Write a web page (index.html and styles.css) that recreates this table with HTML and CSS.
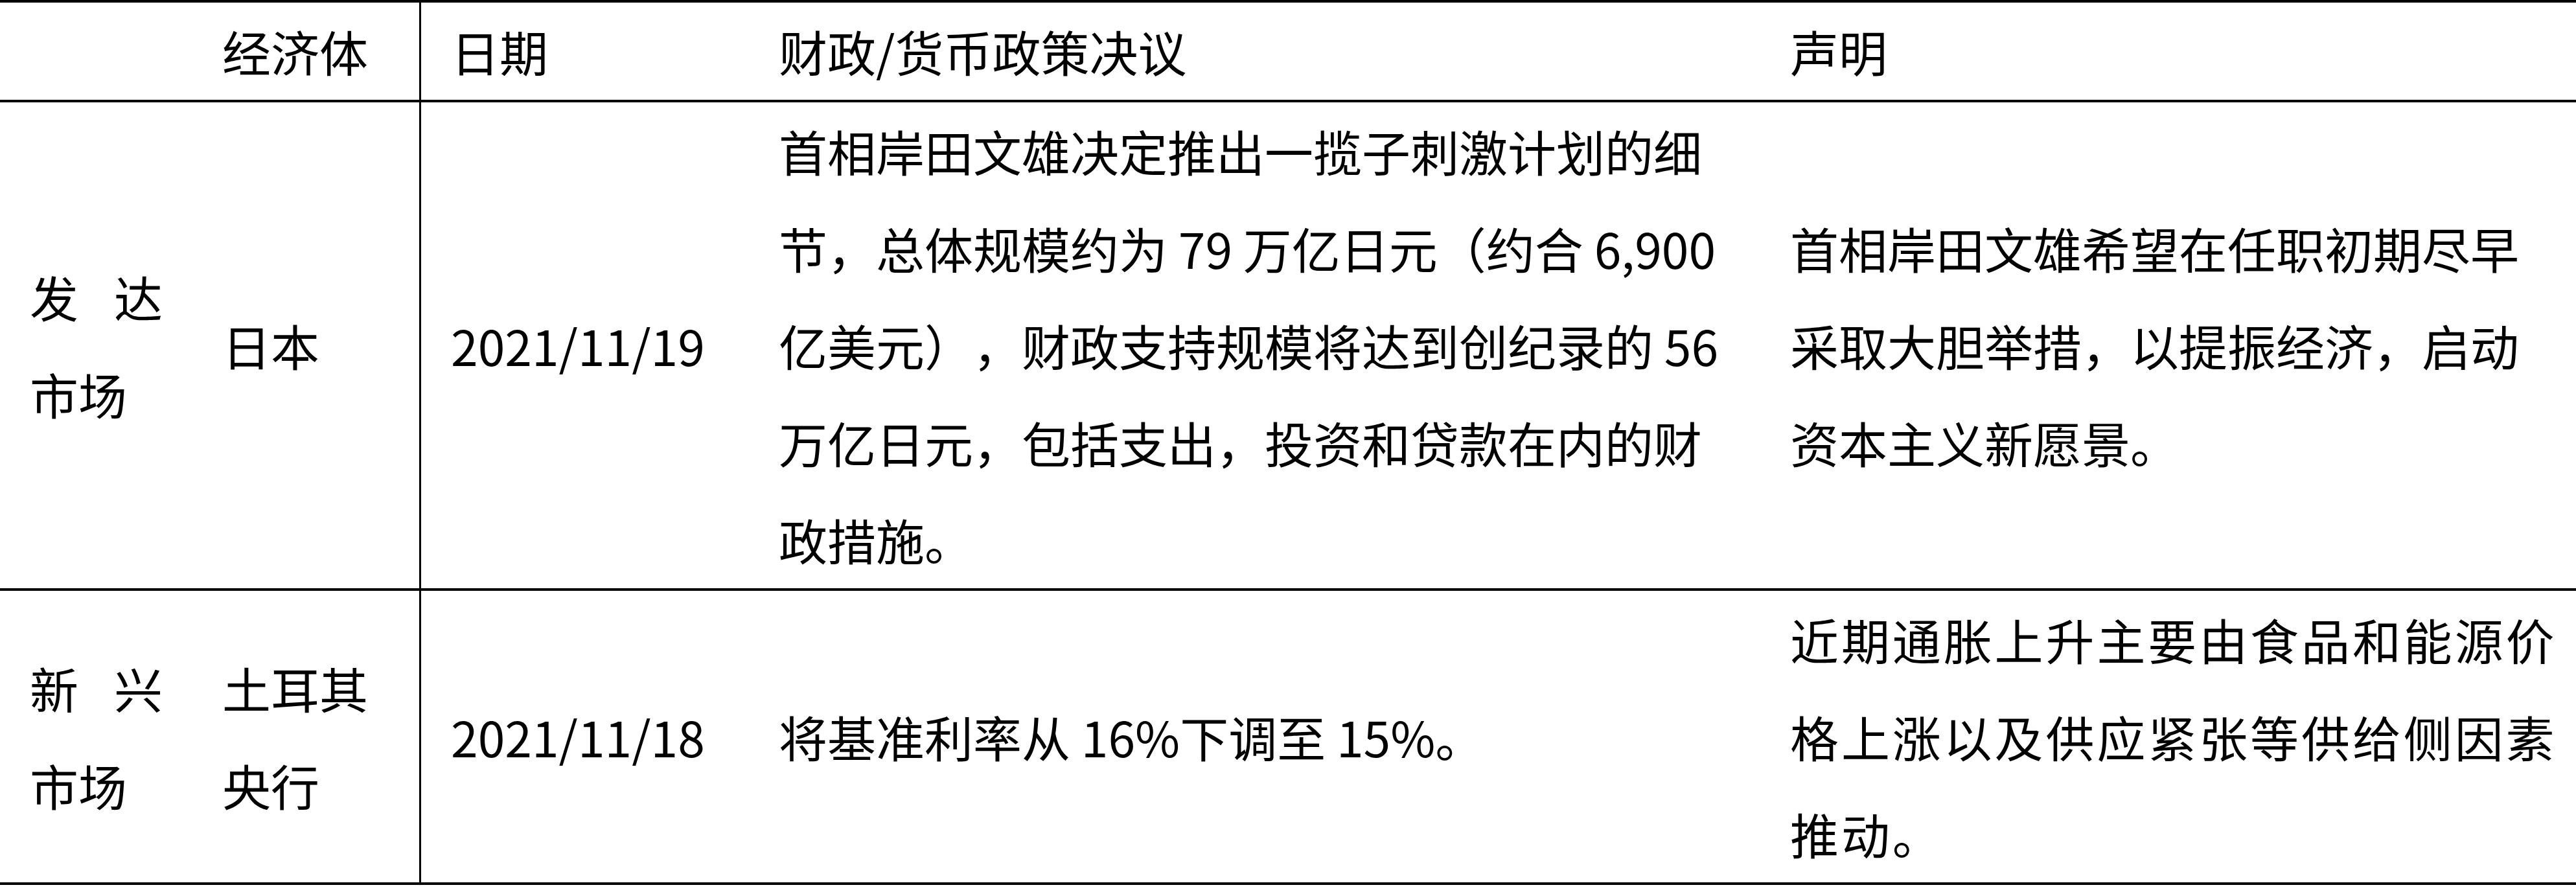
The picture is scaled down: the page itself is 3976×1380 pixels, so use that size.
FILE: index.html
```html
<!DOCTYPE html>
<html lang="zh-CN">
<head>
<meta charset="utf-8">
<title>政策决议</title>
<link rel="stylesheet" href="styles.css">
</head>
<body>
<table class="policy">
  <colgroup>
    <col class="c-market">
    <col class="c-econ">
    <col class="c-date">
    <col class="c-decision">
    <col class="c-statement">
  </colgroup>
  <thead>
    <tr>
      <th class="cell"></th>
      <th class="cell econ">经济体</th>
      <th class="cell">日期</th>
      <th class="cell">财政/货币政策决议</th>
      <th class="cell">声明</th>
    </tr>
  </thead>
  <tbody>
    <tr>
      <td class="cell">
        <span class="dist"><span>发</span><span>达</span></span>
        <span class="line">市场</span>
      </td>
      <td class="cell econ">日本</td>
      <td class="cell">2021/11/19</td>
      <td class="cell">首相岸田文雄决定推出一揽子刺激计划的细节，总体规模约为 79 万亿日元（约合 6,900 亿美元），财政支持规模将达到创纪录的 56 万亿日元，包括支出，投资和贷款在内的财政措施。</td>
      <td class="cell stmt">首相岸田文雄希望在任职初期尽早采取大胆举措，以提振经济，启动资本主义新愿景。</td>
    </tr>
    <tr>
      <td class="cell">
        <span class="dist"><span>新</span><span>兴</span></span>
        <span class="line">市场</span>
      </td>
      <td class="cell econ">土耳其央行</td>
      <td class="cell">2021/11/18</td>
      <td class="cell">将基准利率从 16%下调至 15%。</td>
      <td class="cell stmt spread">近期通胀上升主要由食品和能源价格上涨以及供应紧张等供给侧因素推动。</td>
    </tr>
  </tbody>
</table>
</body>
</html>
```

FILE: styles.css
```css
html, body {
  margin: 0;
  padding: 0;
  background: #ffffff;
}

body {
  font-family: "Noto Sans CJK SC", "Noto Sans", sans-serif;
  font-size: 75px;
  line-height: 150px;
  color: #000000;
  text-spacing-trim: space-all;
}

.policy {
  width: 3976px;
  table-layout: fixed;
  border-collapse: separate;
  border-spacing: 0;
  border-top: 4px solid #000;
}

.c-market { width: 297px; }
.c-econ { width: 353px; }
.c-date { width: 506px; }
.c-decision { width: 1561px; }
.c-statement { width: 1259px; }

.cell {
  padding: 0 46px;
  border-bottom: 4px solid #000;
  vertical-align: middle;
  text-align: left;
  font-weight: normal;
  word-break: normal;
  text-spacing-trim: space-all;
}

.econ {
  border-right: 3px solid #000;
}

.stmt {
  padding-right: 23px;
}

.spread {
  letter-spacing: 3.9px;
}

.dist {
  display: flex;
  justify-content: space-between;
}

.line {
  display: block;
}
```
